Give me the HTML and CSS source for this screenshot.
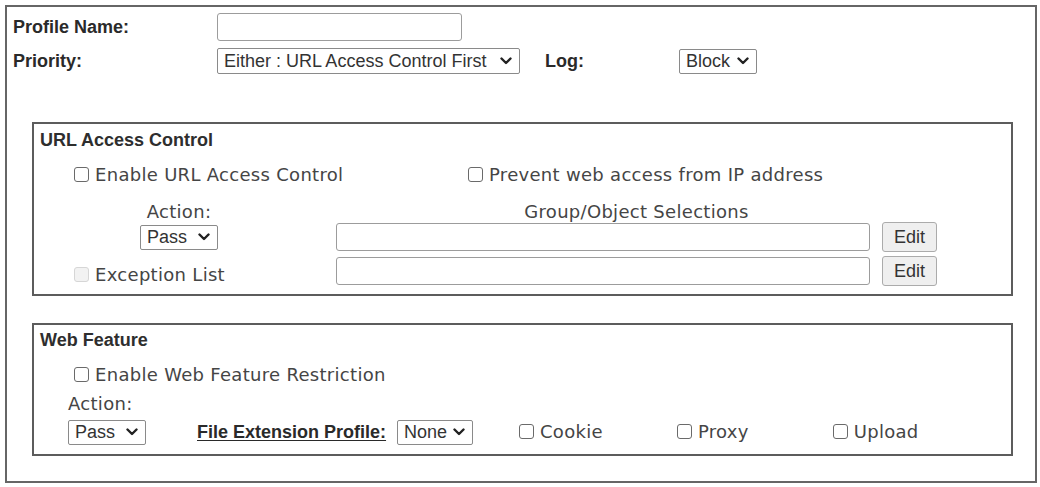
FILE: index.html
```html
<!DOCTYPE html>
<html lang="en">
<head>
<meta charset="utf-8">
<title>Profile</title>
<link rel="stylesheet" href="styles.css">
</head>
<body>
<div class="panel">
  <div class="top-row">
    <span class="lbl lbl-col">Profile Name:</span>
    <input class="text profile-input" type="text">
  </div>
  <div class="top-row row2">
    <span class="lbl lbl-col">Priority:</span>
    <div class="select sel-priority"><span>Either : URL Access Control First</span><svg class="chev" viewBox="0 0 12 8" width="12" height="8"><polyline points="1.5,1.5 6,6 10.5,1.5"/></svg></div>
    <span class="lbl log-lbl">Log:</span>
    <div class="select sel-block"><span>Block</span><svg class="chev" viewBox="0 0 12 8" width="12" height="8"><polyline points="1.5,1.5 6,6 10.5,1.5"/></svg></div>
  </div>

  <div class="box box-url">
    <div class="box-title">URL Access Control</div>
    <div class="url-grid">
      <label class="chk col1 indent"><input type="checkbox"><span>Enable URL Access Control</span></label>
      <label class="chk span23 indent-prevent"><input type="checkbox"><span>Prevent web access from IP address</span></label>

      <div class="col1 centered txt">Action:</div>
      <div class="span23 centered txt">Group/Object Selections</div>

      <div class="col1 centered cell-mid"><div class="select sel-pass"><span>Pass</span><svg class="chev" viewBox="0 0 12 8" width="12" height="8"><polyline points="1.5,1.5 6,6 10.5,1.5"/></svg></div></div>
      <input class="text grid-input" type="text">
      <button class="btn" type="button">Edit</button>

      <label class="chk col1 indent disabled"><input type="checkbox" disabled><span>Exception List</span></label>
      <input class="text grid-input" type="text">
      <button class="btn" type="button">Edit</button>
    </div>
  </div>

  <div class="box box-web">
    <div class="box-title">Web Feature</div>
    <label class="chk web-enable"><input type="checkbox"><span>Enable Web Feature Restriction</span></label>
    <div class="txt web-action">Action:</div>
    <div class="web-row">
      <div class="select sel-pass"><span>Pass</span><svg class="chev" viewBox="0 0 12 8" width="12" height="8"><polyline points="1.5,1.5 6,6 10.5,1.5"/></svg></div>
      <span class="lbl file-ext">File Extension Profile:</span>
      <div class="select sel-none"><span>None</span><svg class="chev" viewBox="0 0 12 8" width="12" height="8"><polyline points="1.5,1.5 6,6 10.5,1.5"/></svg></div>
      <label class="chk cookie"><input type="checkbox"><span>Cookie</span></label>
      <label class="chk proxy"><input type="checkbox"><span>Proxy</span></label>
      <label class="chk upload"><input type="checkbox"><span>Upload</span></label>
    </div>
  </div>
</div>
</body>
</html>
```

FILE: styles.css
```css
html, body {
  margin: 0;
  padding: 0;
  background: #ffffff;
}

body {
  font-family: "Liberation Sans", Arial, sans-serif;
  font-size: 18px;
  line-height: 20px;
  color: #333333;
}

.panel {
  margin: 5px 0 0 5px;
  width: 1032px;
  height: 478px;
  box-sizing: border-box;
  border: 2px solid #666666;
  padding: 6px 0 0 6px;
}

.top-row {
  display: flex;
  align-items: center;
  height: 28px;
}

.row2 {
  margin-top: 7px;
  height: 26px;
}

.lbl {
  font-family: "Liberation Sans", Arial, sans-serif;
  font-weight: bold;
  font-size: 18px;
  color: #2a2a2a;
  white-space: nowrap;
}

.lbl-col {
  width: 204px;
  flex: none;
}

.log-lbl {
  margin-left: 25px;
  width: 134px;
  flex: none;
}

.text {
  box-sizing: border-box;
  height: 28px;
  border: 1px solid #9c9c9c;
  border-radius: 3px;
  background: #ffffff;
  margin: 0;
  padding: 0 4px;
  font: 16px "Liberation Sans", Arial, sans-serif;
}

.profile-input {
  width: 245px;
}

.select {
  box-sizing: border-box;
  display: inline-flex;
  align-items: center;
  justify-content: space-between;
  height: 25px;
  border: 1px solid #8a8a8a;
  border-radius: 2px;
  background: #ffffff;
  padding: 0 7px 0 6px;
  font-family: "Liberation Sans", Arial, sans-serif;
  font-size: 18px;
  color: #333333;
  white-space: nowrap;
  flex: none;
}

.chev {
  display: block;
  flex: none;
}

.chev polyline {
  fill: none;
  stroke: #222222;
  stroke-width: 2.4;
  stroke-linecap: round;
  stroke-linejoin: round;
}

.sel-priority {
  width: 303px;
  height: 26px;
}

.sel-block {
  width: 78px;
}

.sel-pass {
  width: 78px;
}

.sel-none {
  width: 76px;
}

.box {
  box-sizing: border-box;
  width: 981px;
  margin-left: 19px;
  border: 2px solid #5c5c5c;
  padding: 0 0 8px 6px;
}

.box-url {
  margin-top: 48px;
  height: 174px;
}

.box-web {
  margin-top: 27px;
  height: 133px;
}

.box-title {
  font-weight: bold;
  color: #2e2e2e;
  line-height: 20px;
  margin-top: 6px;
}

.box-web .box-title {
  margin-top: 5px;
}

.txt,
.chk span {
  font-family: "DejaVu Sans", Verdana, sans-serif;
  font-size: 18px;
  letter-spacing: 0.3px;
  color: #454545;
  white-space: nowrap;
}

.chk {
  display: flex;
  align-items: center;
}

.chk input {
  -webkit-appearance: none;
  appearance: none;
  box-sizing: border-box;
  width: 15px;
  height: 15px;
  margin: -2px 6px 0 0;
  border: 1px solid #6a6a6a;
  border-radius: 3px;
  background: #ffffff;
  flex: none;
}

.chk.disabled input {
  border-color: #d6d6d6;
  background: #f2f2f2;
}

.url-grid {
  display: grid;
  grid-template-columns: 284px 534px 55px;
  grid-template-rows: 22px 36px 30px 34px;
  column-gap: 12px;
  align-items: end;
  margin-top: 14px;
}

.col1 {
  grid-column: 1;
  padding-right: 6px;
}

.span23 {
  grid-column: 2 / span 2;
}

.indent {
  padding-left: 34px;
  height: 22px;
}

.indent-prevent {
  padding-left: 132px;
  height: 22px;
}

.centered {
  text-align: center;
}

.cell-mid {
  display: flex;
  justify-content: center;
  align-items: center;
  height: 30px;
}

.grid-input {
  width: 534px;
  margin-bottom: 1px;
}

.btn {
  box-sizing: border-box;
  width: 55px;
  height: 30px;
  margin: 0;
  padding: 0;
  border: 1px solid #ababab;
  border-radius: 3px;
  background: #efefef;
  font-family: "Liberation Sans", Arial, sans-serif;
  font-size: 18px;
  color: #333333;
}

.web-enable {
  margin-top: 14px;
  padding-left: 34px;
  height: 22px;
}

.web-action {
  margin-top: 8px;
  padding-left: 28px;
  line-height: 20px;
}

.web-row {
  display: flex;
  align-items: center;
  height: 28px;
  margin-top: 4px;
  padding-left: 28px;
}

.file-ext {
  margin-left: 51px;
  width: 192px;
  text-decoration: underline;
  text-underline-offset: 2px;
  flex: none;
}

.sel-none {
  margin-left: 8px;
}

.cookie {
  margin-left: 46px;
}

.proxy {
  margin-left: 74px;
}

.upload {
  margin-left: 84px;
}
```
